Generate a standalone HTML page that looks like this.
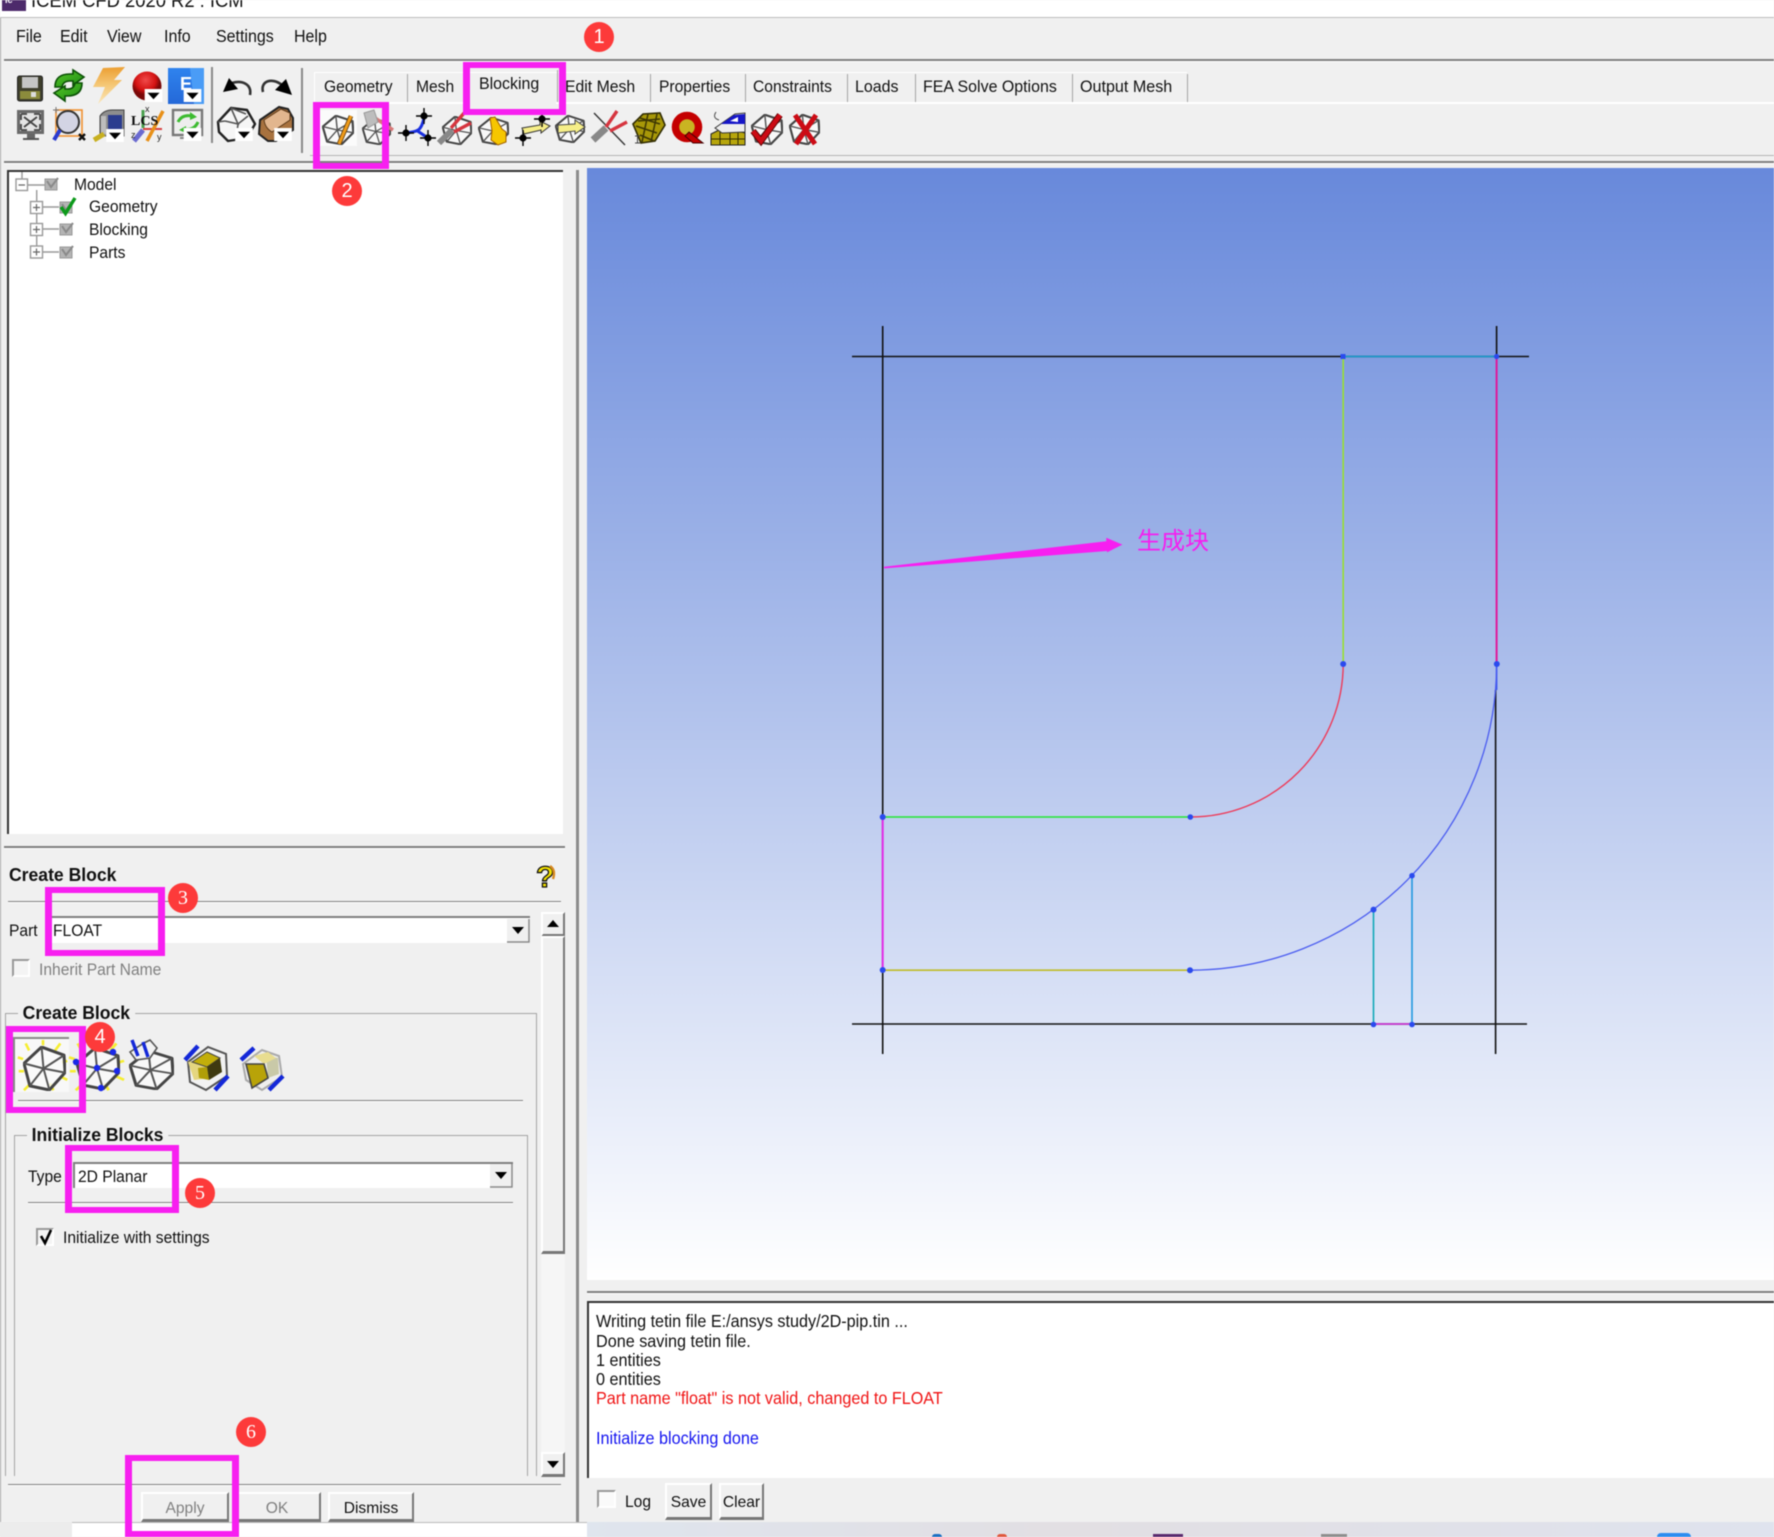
<!DOCTYPE html>
<html><head><meta charset="utf-8"><title>ICEM CFD 2020 R2 : ICM</title>
<style>
html,body{margin:0;padding:0;width:1774px;height:1537px;overflow:hidden;background:#f0f0f0}
#r{position:relative;width:1774px;height:1537px;overflow:hidden;background:#f0f0f0;font-family:"Liberation Sans","Noto Sans CJK SC",sans-serif;color:#111;filter:blur(.45px)}
#r div,#r span,#r svg{position:absolute}
.t{white-space:nowrap;line-height:20px;font-size:16.8px;transform:scaleX(.93);transform-origin:0 50%}
.b{font-weight:bold;font-size:18.9px}
.ms{font-size:17.6px;transform:scaleX(.92)}
.mn{font-size:17.2px}
.h{height:2px;background:#808080;border-bottom:1px solid #fff}
.g{background:#a4a4a4;width:1px}
.btn{background:#f0f0f0;border-top:2px solid #fff;border-left:2px solid #fff;border-right:2px solid #777;border-bottom:3px solid #777;box-sizing:border-box;text-align:center;line-height:29px;font-size:15.6px}
.m{border:solid #f71ff0;box-sizing:border-box;border-width:6.5px 7px}
.n{width:30px;height:30px;border-radius:15px;background:#fd3a3a;color:#fff;text-align:center;line-height:30px;font-size:20px}
.c{background:#fff;border-top:2px solid #808080;border-left:2px solid #808080;box-sizing:border-box}
.ck{background:#f4f4f4;border:2px solid #999;border-right-color:#fff;border-bottom-color:#fff;box-sizing:border-box}
</style></head><body><div id="r">

<!-- title bar -->
<div style="left:0;top:0;width:1774px;height:17px;background:#fff"></div>
<div style="left:0;top:17px;width:1774px;height:1px;background:#bdbdbd"></div>
<div style="left:2px;top:0;width:24px;height:11px;background:#4d2a6b"></div>
<span class="t" style="left:5px;top:-7px;font-size:9px;color:#fff;font-weight:bold;line-height:14px;transform:none">Ic</span>
<span class="t" style="left:31px;top:-9px;font-size:19.8px;line-height:20px">ICEM CFD 2020 R2 : ICM</span>
<div style="left:0;top:18px;width:1px;height:1505px;background:#a8a8a8"></div>

<!-- menu -->
<span class="t mn" style="left:16px;top:26px">File</span>
<span class="t mn" style="left:60px;top:26px">Edit</span>
<span class="t mn" style="left:107px;top:26px">View</span>
<span class="t mn" style="left:164px;top:26px">Info</span>
<span class="t mn" style="left:216px;top:26px">Settings</span>
<span class="t mn" style="left:294px;top:26px">Help</span>
<div class="h" style="left:4px;top:59px;width:1770px"></div>

<!-- tabs -->
<div style="left:314px;top:72px;width:873px;height:1px;background:#fff"></div>
<div style="left:314px;top:72px;width:1px;height:30px;background:#fff"></div>
<div style="left:314px;top:102px;width:1460px;height:2px;background:#fff"></div>
<div style="left:466px;top:102px;width:90px;height:2px;background:#f0f0f0"></div>
<div class="g" style="left:407px;top:74px;height:28px"></div>
<div class="g" style="left:557px;top:70px;height:32px"></div>
<div class="g" style="left:650px;top:74px;height:28px"></div>
<div class="g" style="left:745px;top:74px;height:28px"></div>
<div class="g" style="left:847px;top:74px;height:28px"></div>
<div class="g" style="left:915px;top:74px;height:28px"></div>
<div class="g" style="left:1072px;top:74px;height:28px"></div>
<div class="g" style="left:1187px;top:74px;height:28px"></div>
<span class="t" style="left:324px;top:77px">Geometry</span>
<span class="t" style="left:416px;top:77px">Mesh</span>
<span class="t" style="left:479px;top:74px;transform:scaleX(.95)">Blocking</span>
<span class="t" style="left:565px;top:77px;transform:scaleX(.94)">Edit Mesh</span>
<span class="t" style="left:659px;top:77px">Properties</span>
<span class="t" style="left:753px;top:77px">Constraints</span>
<span class="t" style="left:855px;top:77px;transform:scaleX(.95)">Loads</span>
<span class="t" style="left:923px;top:77px;transform:scaleX(.95)">FEA Solve Options</span>
<span class="t" style="left:1080px;top:77px;transform:scaleX(.96)">Output Mesh</span>

<div style="left:211px;top:67px;width:2px;height:76px;background:#8a8a8a"></div>
<div style="left:301px;top:68px;width:2px;height:85px;background:#8a8a8a"></div>
<div style="left:310px;top:155px;width:1464px;height:1px;background:#b4b4b4"></div>
<div class="h" style="left:4px;top:161px;width:1770px"></div>
<div style="left:320px;top:110px;width:37px;height:36px;background:#fbfbfb"></div>

<!-- tree -->
<div style="left:7px;top:170px;width:556px;height:664px;background:#fff;border-top:2px solid #333;border-left:2px solid #333;box-sizing:border-box"></div>
<span class="t" style="left:74px;top:175px">Model</span>
<span class="t" style="left:89px;top:197px">Geometry</span>
<span class="t" style="left:89px;top:220px">Blocking</span>
<span class="t" style="left:89px;top:243px">Parts</span>

<div class="h" style="left:4px;top:846px;width:561px"></div>
<div style="left:576px;top:170px;width:3px;height:1352px;background:#8c8c8c"></div>

<!-- viewport -->
<div style="left:587px;top:168px;width:1187px;height:1112px;background:linear-gradient(#6889db,#fff)"></div>
<span class="t" style="left:1137px;top:527px;font-size:24px;line-height:30px;color:#f41ff0;transform:none">生成块</span>

<!-- panel -->
<span class="t b" style="left:9px;top:866px">Create Block</span>
<div class="h" style="left:8px;top:901px;width:553px;height:1px"></div>
<span class="t" style="left:9px;top:921px">Part</span>
<div class="c" style="left:48px;top:916px;width:482px;height:27px"></div>
<span class="t" style="left:53px;top:921px">FLOAT</span>
<div class="ck" style="left:12px;top:959px;width:18px;height:18px"></div>
<span class="t" style="left:39px;top:960px;color:#808080">Inherit Part Name</span>

<div style="left:5px;top:1013px;width:532px;height:463px;border:1px solid #a4a4a4;border-bottom:0;box-sizing:border-box"></div>
<div class="t b" style="left:18px;top:1004px;background:#f0f0f0;padding:0 5px">Create Block</div>
<div style="left:13px;top:1037px;width:56px;height:55px;background:#f8f8f8;border-top:2px solid #888;border-left:2px solid #888;box-sizing:border-box"></div>
<div class="h" style="left:18px;top:1100px;width:505px;height:1px"></div>
<div style="left:14px;top:1135px;width:514px;height:341px;border:1px solid #a4a4a4;border-bottom:0;box-sizing:border-box"></div>
<div class="t b" style="left:27px;top:1126px;background:#f0f0f0;padding:0 5px">Initialize Blocks</div>
<span class="t" style="left:28px;top:1167px">Type</span>
<div class="c" style="left:73px;top:1162px;width:440px;height:26px"></div>
<span class="t" style="left:78px;top:1167px">2D Planar</span>
<div class="h" style="left:28px;top:1202px;width:485px;height:1px"></div>
<div class="ck" style="left:36px;top:1228px;width:18px;height:18px"></div>
<span class="t" style="left:63px;top:1228px">Initialize with settings</span>

<!-- scrollbar -->
<div style="left:541px;top:936px;width:24px;height:540px;background:#f6f6f6"></div>
<div class="btn" style="left:541px;top:912px;width:24px;height:25px"></div>
<div class="btn" style="left:541px;top:936px;width:24px;height:318px"></div>
<div class="btn" style="left:541px;top:1452px;width:24px;height:25px"></div>

<div class="h" style="left:8px;top:1484px;width:553px;height:1px"></div>
<div class="btn" style="left:141px;top:1492px;width:88px;height:30px;color:#808080">Apply</div>
<div class="btn" style="left:233px;top:1492px;width:88px;height:30px;color:#808080">OK</div>
<div class="btn" style="left:328px;top:1492px;width:86px;height:30px">Dismiss</div>

<!-- message -->
<div class="h" style="left:587px;top:1291px;width:1187px"></div>
<div style="left:587px;top:1301px;width:1187px;height:177px;background:#fff;border-top:2px solid #333;border-left:2px solid #333;box-sizing:border-box"></div>
<span class="t ms" style="left:596px;top:1311px">Writing tetin file E:/ansys study/2D-pip.tin ...</span>
<span class="t ms" style="left:596px;top:1331px">Done saving tetin file.</span>
<span class="t ms" style="left:596px;top:1350px">1 entities</span>
<span class="t ms" style="left:596px;top:1369px">0 entities</span>
<span class="t ms" style="left:596px;top:1388px;color:#f01414">Part name "float" is not valid, changed to FLOAT</span>
<span class="t ms" style="left:596px;top:1428px;color:#1414f0">Initialize blocking done</span>
<div class="ck" style="left:597px;top:1490px;width:19px;height:18px;background:#fafafa"></div>
<span class="t" style="left:625px;top:1492px">Log</span>
<div class="btn" style="left:665px;top:1483px;width:47px;height:37px;line-height:35px">Save</div>
<div class="btn" style="left:719px;top:1483px;width:45px;height:37px;line-height:35px">Clear</div>

<!-- bottom strip -->
<div style="left:0;top:1522px;width:72px;height:15px;background:#ececec"></div>
<div style="left:72px;top:1522px;width:515px;height:15px;background:#fff;border-top:1px solid #bbb;box-sizing:border-box"></div>
<div style="left:587px;top:1522px;width:1187px;height:15px;background:linear-gradient(90deg,#dfe5ee,#e2dfe3 40%,#dfe3ee)"></div>
<div style="left:932px;top:1534px;width:10px;height:3px;background:#1b6fc2;border-radius:5px 5px 0 0"></div>
<div style="left:997px;top:1534px;width:10px;height:3px;background:#e0573c;border-radius:5px 5px 0 0"></div>
<div style="left:1153px;top:1534px;width:30px;height:3px;background:#5a2a6e"></div>
<div style="left:1321px;top:1534px;width:26px;height:3px;background:#8e8e8e"></div>
<div style="left:1657px;top:1533px;width:34px;height:4px;background:#2d8df0;border-radius:6px 6px 0 0"></div>

<!-- icons and drawing -->
<svg style="left:0;top:0" width="1774" height="1537" viewBox="0 0 1774 1537">
<defs>
<symbol id="hex" viewBox="0 0 44 44" preserveAspectRatio="none">
<path d="M19 1L42 9L43 26L27 43L7 39L1 17Z" fill="#fafafa" fill-opacity=".8" stroke="#444" stroke-width="3" stroke-linejoin="round"/>
<path d="M21 22L19 1M21 22L43 26M21 22L27 43M21 22L1 17M21 22L7 39M21 22L42 9" fill="none" stroke="#555" stroke-width="2"/>
</symbol>
<symbol id="dd" viewBox="0 0 19 14"><rect width="19" height="14" fill="#fff"/><path d="M3 4H16L9.5 11Z" fill="#000"/></symbol>
<symbol id="star" viewBox="0 0 16 16"><path d="M8 0V16M0 8H16" stroke="#000" stroke-width="1.4"/><circle cx="8" cy="8" r="3.6" fill="#000"/></symbol>
<symbol id="tc" viewBox="0 0 16 14"><rect x="1" y="2" width="12" height="11" fill="#b4b4b4" stroke="#999"/><path d="M3 4L7 10L14 1" fill="none" stroke="#8a8a8a" stroke-width="2"/></symbol>
<symbol id="tick" viewBox="0 0 60 60" preserveAspectRatio="none"><path d="M10 4L14 12M30 0V6M50 4L44 12M58 24L52 26M58 46L50 42M42 58L38 50M16 50L8 58M2 36H8M1 20L7 22" stroke="#f6ee30" stroke-width="3"/></symbol>
<linearGradient id="bo" x1="0" y1="0" x2="0" y2="1"><stop offset="0" stop-color="#ec9f32"/><stop offset=".5" stop-color="#f5c878"/><stop offset="1" stop-color="#fbe6b8"/></linearGradient>
<radialGradient id="rd" cx=".45" cy=".3"><stop offset="0" stop-color="#f04a4a"/><stop offset=".7" stop-color="#d41212"/><stop offset="1" stop-color="#7a0808"/></radialGradient>
<linearGradient id="blu" x1="0" y1="0" x2="0" y2="1"><stop offset="0" stop-color="#2f83ee"/><stop offset="1" stop-color="#2468d8"/></linearGradient>
<linearGradient id="gr" x1="0" y1="0" x2="1" y2="1"><stop offset="0" stop-color="#58c828"/><stop offset="1" stop-color="#1c8a14"/></linearGradient>
</defs>

<!-- tree lines -->
<g fill="none" stroke="#999" stroke-width="1.4">
<path d="M22 172V179M27 185H45M36.7 190V246M43 207H59M43 229H59M43 252H59"/>
<rect x="16" y="179" width="11.5" height="11.5" fill="#fff"/>
<rect x="30.5" y="201.5" width="12" height="12" fill="#fff"/>
<rect x="30.5" y="223.5" width="12" height="12" fill="#fff"/>
<rect x="30.5" y="246" width="12" height="12" fill="#fff"/>
<path d="M18.5 185H25M33 207.5H40M36.5 204V211M33 229.5H40M36.5 226V233M33 252H40M36.5 248.5V255.5" stroke="#666" stroke-width="1.2"/>
</g>
<use href="#tc" x="44" y="177" width="16" height="14"/>
<use href="#tc" x="59" y="200" width="16" height="14"/>
<use href="#tc" x="59" y="222" width="16" height="14"/>
<use href="#tc" x="59" y="245" width="16" height="14"/>
<path d="M61 207L65.5 213.5L75 198" fill="none" stroke="#0c9a1a" stroke-width="3.4"/>

<!-- save -->
<rect x="17.5" y="76" width="25" height="25" rx="2" fill="#3e3e2c" stroke="#222"/>
<rect x="22" y="77" width="16" height="11" fill="#c4c4c4"/>
<rect x="20" y="91" width="20" height="8" fill="#8b8b3c"/><rect x="31" y="92" width="5" height="5" fill="#ddd"/>
<!-- refresh -->
<path d="M55 87Q55 74 70 74H73V70L84 77L73 85V81H70Q63 81 62 87Z" fill="url(#gr)" stroke="#0c5006" stroke-width="1.6"/>
<path d="M82 83Q82 96 67 96H65V101L54 93L65 86V89H68Q74 89 75 83Z" fill="url(#gr)" stroke="#0c5006" stroke-width="1.6"/>
<!-- bolt -->
<path d="M103 68L125 67L114 80L122 80L98 104L105 87L93 87Z" fill="url(#bo)"/>
<!-- red -->
<circle cx="147" cy="86" r="14.5" fill="url(#rd)"/>
<use href="#dd" x="144" y="89" width="19" height="13"/>
<!-- E -->
<rect x="168" y="68" width="36" height="36" fill="url(#blu)"/>
<path d="M190 68H204V104H194Z" fill="#4a9cf6"/>
<text x="180" y="90" font-family="Liberation Sans" font-weight="bold" font-size="18" fill="#fff">E</text>
<use href="#dd" x="183" y="89" width="19" height="13"/>
<!-- undo redo -->
<path d="M250 95C252 84 242 80 232 83" fill="none" stroke="#333" stroke-width="2.6"/><path d="M223 92L229 78L238 89Z" fill="#000"/>
<path d="M263 92C260 81 272 77 282 85" fill="none" stroke="#333" stroke-width="2.6"/><path d="M292 95L286 79L275 90Z" fill="#000"/>
<!-- fit -->
<rect x="17" y="110" width="27" height="24" fill="#6a6a6a"/><rect x="20" y="113" width="21" height="18" fill="#e4e4e4"/>
<path d="M24 117L37 127M37 117L24 127M21 114h6M21 114v6M40 114h-6M40 114v6M21 130h6M21 130v-6M40 130h-6M40 130v-6" stroke="#444" stroke-width="1.8" fill="none"/>
<rect x="27" y="134" width="8" height="4" fill="#666"/><rect x="23" y="138" width="16" height="2" fill="#555"/>
<!-- zoom -->
<rect x="56" y="110" width="26" height="26" fill="none" stroke="#f09030" stroke-width="1.6"/>
<circle cx="68" cy="122" r="11" fill="#d3d4e4" stroke="#333" stroke-width="2"/>
<path d="M60 130L54 140" stroke="#2a3ad0" stroke-width="4"/>
<path d="M79 134L85 140M85 134L79 140" stroke="#111" stroke-width="2.4"/>
<path d="M56 107V113M53 110H59" stroke="#777"/>
<!-- camera -->
<path d="M100 116Q104 110 112 110H124V136H100Z" fill="#8e8e8e" stroke="#444"/>
<rect x="108" y="115" width="14" height="14" fill="#2b3c8e"/><rect x="101" y="116" width="5" height="18" fill="#bdbdbd"/>
<path d="M94 140L104 134" stroke="#c8b020" stroke-width="5"/>
<use href="#dd" x="105" y="129" width="20" height="13"/>
<!-- LCS -->
<path d="M143 110V128" stroke="#4aa050" stroke-width="3"/>
<path d="M143 130L134 141" stroke="#6a6ad0" stroke-width="5"/>
<path d="M143 129H162" stroke="#d84040" stroke-width="2"/>
<path d="M163 111L147 141" stroke="#e89018" stroke-width="3.5"/>
<text x="131" y="125" font-family="Liberation Serif" font-weight="bold" font-size="14" fill="#111">LCS</text>
<text x="145" y="112" font-family="Liberation Sans" font-size="9" fill="#222">x</text>
<text x="131" y="138" font-family="Liberation Sans" font-size="9" fill="#222">z</text>
<text x="157" y="140" font-family="Liberation Sans" font-size="9" fill="#222">y</text>
<!-- refresh screen -->
<rect x="173" y="110" width="29" height="25" fill="#eee" stroke="#777" stroke-width="2.4"/>
<path d="M178 122Q182 114 192 116M198 122Q194 131 184 129" fill="none" stroke="#3cbb30" stroke-width="3"/><path d="M190 112L197 117L190 120ZM186 126L179 130L186 133Z" fill="#3cbb30"/>
<path d="M180 138H196" stroke="#888" stroke-width="2"/>
<use href="#dd" x="183" y="128" width="19" height="13"/>
<!-- hex wide -->
<path d="M218 122L231 108L247 110L255 124L247 138L228 141L219 132Z" fill="#f6f6f6" stroke="#222" stroke-width="2.4" stroke-linejoin="round"/>
<path d="M231 108L238 124L225 121M238 124L248 116M238 124L236 140M218 122L225 121M231 108L246 114" fill="none" stroke="#555" stroke-width="1.6"/>
<use href="#dd" x="234" y="128" width="20" height="13"/>
<!-- cylinder -->
<path d="M260 120L279 107L288 109L293 118L293 130L276 141L268 141L259 134Z" fill="#a8723f" stroke="#222" stroke-width="2"/>
<path d="M264 120L281 109L290 113L290 120L272 132Q265 128 264 120Z" fill="#e2b68e" stroke="#5a3818"/>
<use href="#dd" x="273" y="128" width="20" height="13"/>

<!-- blocking toolbar -->
<use href="#hex" x="322" y="115" width="32" height="30"/>
<path d="M351 116L339 144" stroke="#5a3a10" stroke-width="4.6"/><path d="M351 116L339 144" stroke="#ee9a18" stroke-width="3"/>
<use href="#hex" x="362" y="118" width="29" height="27"/>
<path d="M375 118L393 130" stroke="#d87878" stroke-width="3.5"/>
<path d="M364 113L374 110L378 122L368 128Z" fill="#bdbdbd" stroke="#999"/>
<path d="M424 118C421 132 417 131 407 133M416 130L428 138" fill="none" stroke="#1a30e0" stroke-width="3"/>
<use href="#star" x="416" y="108" width="16" height="16"/><use href="#star" x="398" y="125" width="16" height="16"/><use href="#star" x="420" y="130" width="16" height="16"/>
<use href="#hex" x="442" y="116" width="30" height="29"/>
<path d="M439 143L452 130" stroke="#888" stroke-width="6"/><path d="M451 128L465 112M454 132L471 123" stroke="#d6353f" stroke-width="3.4"/>
<use href="#hex" x="478" y="117" width="31" height="28"/>
<path d="M490 118L495 117L502 129L506 132L506 142L498 145L491 140L492 131Z" fill="#f6c600" stroke="#a06000"/>
<path d="M522 128L540 125V121L550 126L541 133V130L524 134Z" fill="#f6ee88" stroke="#333"/>
<use href="#star" x="534" y="111" width="16" height="16"/><use href="#star" x="515" y="130" width="16" height="16"/>
<use href="#hex" x="555" y="115" width="30" height="28"/>
<path d="M558 125L575 124V120L585 127L575 134V131L558 133Z" fill="#f6ee88" stroke="#444"/>
<path d="M594 113L625 145" stroke="#333" stroke-width="1.4"/>
<path d="M593 140L606 128" stroke="#888" stroke-width="7"/><path d="M606 127L617 111M610 131L627 122" stroke="#d6353f" stroke-width="3.4"/>
<path d="M633 124L643 114L660 113L665 125L655 141L641 143Z" fill="#a89808" stroke="#302c04" stroke-width="1.6"/>
<path d="M640 118L660 124M636 126L657 133M640 135L654 141M648 114L642 142M657 114L651 142M638 121L660 119" stroke="#3c3604" stroke-width="1.5"/>
<path d="M635 136H640M637.5 136V143M635 143H640" stroke="#444"/>
<circle cx="687" cy="127" r="11.5" fill="#c9b422" stroke="#c40000" stroke-width="7.5"/>
<path d="M689 132L703 143H693L685 136Z" fill="#c40000" stroke="#400"/>
<path d="M711 134L725 127L745 133V145H711Z" fill="#b7a60c" stroke="#222"/>
<path d="M711 139H745M720 131V145M730 130V145M738 131V145" stroke="#302c04"/>
<path d="M715 128L735 114L745 113L745 132L722 133Z" fill="#eee" stroke="#333"/>
<path d="M721 124L734 115L745 114V124Z" fill="#1616c8"/><path d="M730 121L738 117V122Z" fill="#fff"/>
<path d="M716 112Q712 118 719 120" fill="none" stroke="#444"/>
<use href="#hex" x="751" y="114" width="32" height="31"/>
<path d="M753 131L761 141L780 115" fill="none" stroke="#5a0000" stroke-width="6.4"/><path d="M753 131L761 141L780 115" fill="none" stroke="#cc0b15" stroke-width="4.6"/>
<use href="#hex" x="789" y="114" width="31" height="31"/>
<path d="M795 115L815 144M816 115L796 144" stroke="#cc0b15" stroke-width="5"/>

<!-- help -->
<text x="536" y="887" font-family="Liberation Sans" font-weight="bold" font-size="30" fill="#f2e000" stroke="#111" stroke-width="1.3">?</text>
<path d="M550 866Q556 870 553 879" fill="none" stroke="#d88a20" stroke-width="2.4"/>

<!-- combos arrows -->
<rect x="507" y="919" width="22" height="23" fill="#f0f0f0"/><path d="M507 942H529V919" fill="none" stroke="#888" stroke-width="1.5"/><path d="M512 927H524L518 934Z" fill="#000"/>
<rect x="490" y="1164" width="22" height="23" fill="#f0f0f0"/><path d="M490 1187H512V1164" fill="none" stroke="#888" stroke-width="1.5"/><path d="M495 1172H507L501 1179Z" fill="#000"/>
<path d="M547 927H559L553 920Z" fill="#000"/><path d="M547 1461H559L553 1468Z" fill="#000"/>
<path d="M41 1236L45 1243L51 1230" fill="none" stroke="#000" stroke-width="2.6"/>

<!-- create block icons -->
<use href="#tick" x="17" y="1040" width="52" height="52"/>
<use href="#hex" x="23" y="1046" width="43" height="45"/>
<use href="#tick" x="68" y="1040" width="58" height="52"/>
<use href="#hex" x="76" y="1047" width="44" height="43"/>
<g fill="#1a28e8"><circle cx="97" cy="1068" r="3.2"/><circle cx="113" cy="1052" r="3.2"/><circle cx="117" cy="1071" r="3.2"/><circle cx="101" cy="1088" r="3.2"/><circle cx="76" cy="1062" r="3.2"/></g>
<use href="#hex" x="129" y="1050" width="45" height="40"/>
<path d="M130 1052L144 1043L150 1040L157 1048L150 1058L136 1060Z" fill="#f2f2f2" stroke="#555" stroke-width="1.6"/>
<path d="M132 1040L138 1056M143 1042L148 1057" stroke="#1428d8" stroke-width="3.4"/>
<path d="M188 1062L208 1047L226 1054L227 1076L206 1090L190 1082Z" fill="#f2f2f2" stroke="#555" stroke-width="2"/>
<path d="M188 1062L206 1058L211 1078L194 1080Z" fill="#e5d680"/>
<path d="M192 1062L207 1052L220 1058L207 1067Z" fill="#c2ae0a" stroke="#444"/>
<path d="M198 1068L207 1067L209 1080L199 1078Z" fill="#b09e08"/><path d="M207 1067L220 1058L222 1072L209 1080Z" fill="#3f3a10"/>
<path d="M185 1060L198 1046M215 1090L228 1076" stroke="#1428d8" stroke-width="4.4"/>
<path d="M243 1064L262 1050L279 1056L282 1077L262 1090L246 1080Z" fill="#eeeeee" stroke="#aaa" stroke-width="2"/>
<path d="M266 1056L278 1058L279 1074L268 1078Z" fill="#c9c9a8"/><path d="M254 1056L268 1052L276 1058L264 1064Z" fill="#e8dd90"/>
<path d="M246 1064L264 1064L268 1078L252 1088Z" fill="#b8a308" stroke="#444" stroke-width="1.6"/>
<path d="M241 1060L254 1048M269 1090L283 1076" stroke="#1428d8" stroke-width="4.4"/>

<!-- drawing -->
<g fill="none" stroke-width="1.6">
<path d="M882.7 326V1054M852 356.5H1529M852 1024H1527" stroke="#111"/>
<path d="M1496.6 326V356.5" stroke="#111"/>
<path d="M1495.6 690V1054" stroke="#111"/>
<path d="M1343.2 356.5H1496.6" stroke="#1ba4d8"/>
<path d="M1343.2 356.5V664" stroke="#98e030"/>
<path d="M1496.6 356.5V664" stroke="#e0189a" stroke-width="2"/>
<path d="M1496.6 664V690" stroke="#3a55ee"/>
<path d="M882.7 817H1190.3" stroke="#22e632"/>
<path d="M1190.3 817A153 153 0 0 0 1343.2 664" stroke="#ee3a58" stroke-width="1.4"/>
<path d="M882.7 817V970" stroke="#e42ce8" stroke-width="2"/>
<path d="M882.7 970.2H1190" stroke="#c0bc2a"/>
<path d="M1190 970.2A306.5 306.2 0 0 0 1496.6 664" stroke="#4a5cf0" stroke-width="1.3"/>
<path d="M1373.5 910V1024" stroke="#12a8b8"/>
<path d="M1412 876V1024" stroke="#2098e0"/>
<path d="M1373.5 1024H1412" stroke="#d830e0"/>
</g>
<g fill="#2a4aee">
<rect x="1340.5" y="354" width="5" height="5"/><circle cx="1496.6" cy="356.5" r="2.6"/>
<circle cx="1343.2" cy="664" r="3"/><circle cx="1496.8" cy="664" r="3"/>
<circle cx="882.7" cy="817" r="3"/><circle cx="1190.3" cy="817" r="2.8"/>
<circle cx="882.7" cy="970" r="3"/><circle cx="1190" cy="970.2" r="3"/>
<circle cx="1373.5" cy="909.6" r="3"/><circle cx="1412" cy="875.7" r="2.8"/>
<circle cx="1373.5" cy="1024.5" r="2.8"/><circle cx="1412" cy="1024.5" r="2.8"/>
</g>
<path d="M884 566.8L1106.3 541.2L1106.3 537.8L1122.4 544.6L1107 552.4L1107 551L884 568.4Z" fill="#f71ff0"/>
</svg>

<!-- annotations -->
<div class="m" style="left:463px;top:62px;width:103px;height:53px"></div>
<div class="m" style="left:313px;top:102px;width:76px;height:67px"></div>
<div class="m" style="left:45px;top:887px;width:120px;height:69px"></div>
<div class="m" style="left:6px;top:1026px;width:80px;height:87px"></div>
<div class="m" style="left:65px;top:1145px;width:114px;height:68px"></div>
<div class="m" style="left:125px;top:1455px;width:114px;height:82px"></div>
<div class="n" style="left:584px;top:22px">1</div>
<div class="n" style="left:332px;top:176px">2</div>
<div class="n" style="left:168px;top:883px;font-family:'Liberation Serif',serif">3</div>
<div class="n" style="left:85px;top:1022px">4</div>
<div class="n" style="left:185px;top:1178px;font-family:'Liberation Serif',serif">5</div>
<div class="n" style="left:236px;top:1417px;font-family:'Liberation Serif',serif">6</div>
</div></body></html>
